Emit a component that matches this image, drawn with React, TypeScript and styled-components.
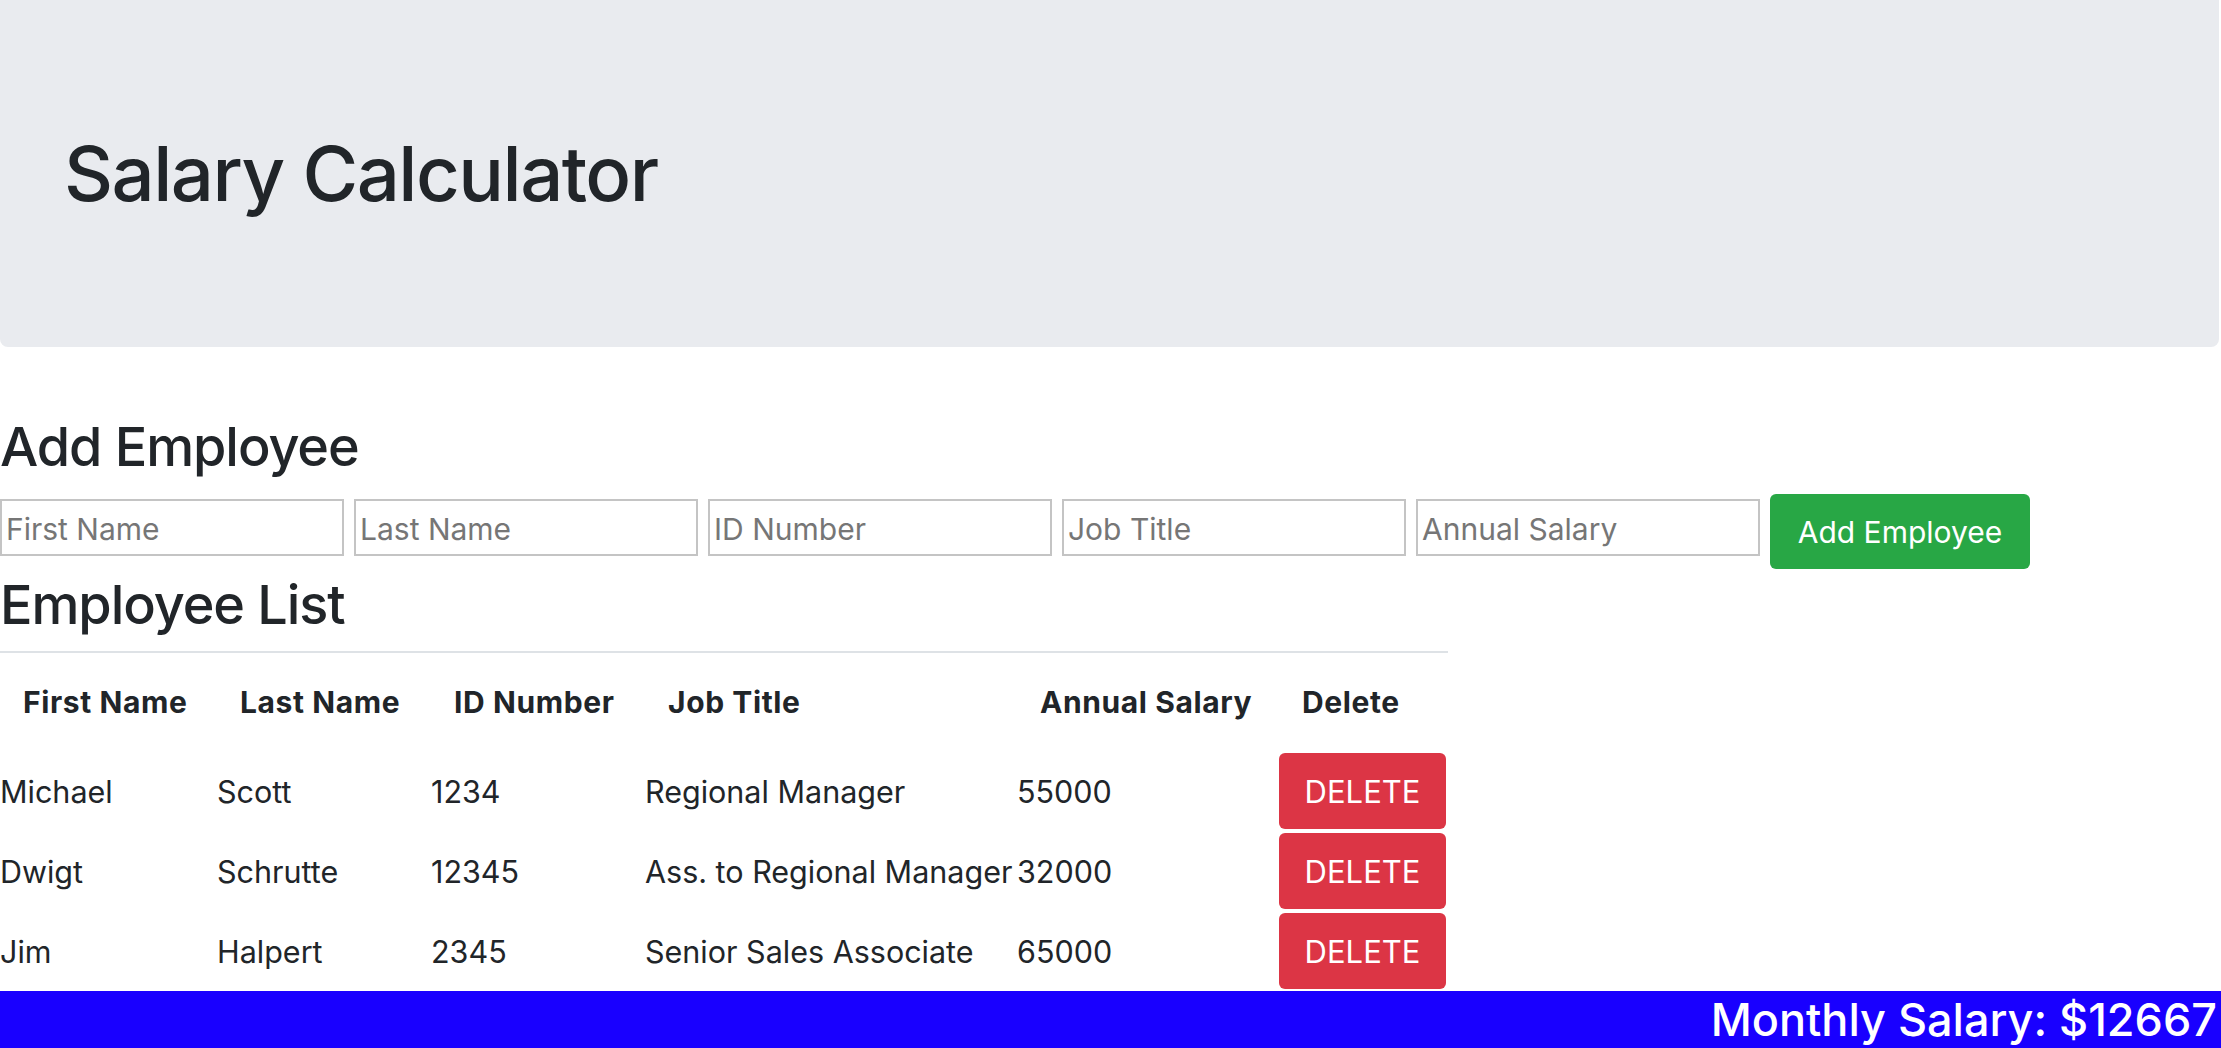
import React from "react";
import styled, { createGlobalStyle } from "styled-components";

const GlobalStyle = createGlobalStyle`
  html, body {
    margin: 0;
    padding: 0;
    background: #ffffff;
  }
  body {
    font-family: Inter, "Noto Sans", "Liberation Sans", sans-serif;
    color: #212529;
  }
  * { box-sizing: border-box; }
`;

const Page = styled.div`
  display: flex;
  flex-direction: column;
  width: 100%;
`;

const Jumbotron = styled.header`
  height: 347px;
  width: calc(100% - 2px);
  background: #e9ebef;
  border-radius: 0 0 8px 8px;
  display: flex;
  align-items: center;
  padding-left: 64px;
`;

const Title = styled.h1`
  margin: 0;
  font-size: 76px;
  font-weight: 500;
  line-height: 1.2;
  letter-spacing: -0.02em;
  color: #212529;
`;

const SectionTitle = styled.h2<{ $top: number }>`
  margin: ${(p) => p.$top}px 0 0 0;
  font-size: 54px;
  font-weight: 500;
  line-height: 66px;
  height: 66px;
  letter-spacing: -0.02em;
  color: #212529;
`;

const FormRow = styled.form`
  display: flex;
  align-items: flex-start;
  gap: 10px;
  margin-top: 14px;
`;

const Field = styled.input`
  width: 344px;
  height: 57px;
  margin-top: 5px;
  border: 2px solid #c4c4c4;
  padding: 2px 4px 0;
  font-family: Inter, "Noto Sans", sans-serif;
  font-size: 30px;
  color: #212529;
  background: #fff;
  outline: none;
  &::placeholder {
    color: #767676;
  }
`;

const AddButton = styled.button`
  width: 260px;
  height: 75px;
  border: none;
  border-radius: 6px;
  background: #28a745;
  color: #ffffff;
  font-family: Inter, "Noto Sans", sans-serif;
  font-size: 30px;
  font-weight: 400;
  cursor: pointer;
`;

const Table = styled.table`
  margin-top: 13px;
  width: 1448px;
  border-collapse: collapse;
  table-layout: fixed;
`;

const HeadCell = styled.th`
  border-top: 2px solid #dee2e6;
  height: 99px;
  padding: 0 0 0 23px;
  text-align: left;
  font-size: 30px;
  font-weight: 700;
  letter-spacing: 0.02em;
  color: #212529;
  white-space: nowrap;
  vertical-align: middle;
`;

const Cell = styled.td`
  height: 80px;
  padding: 2px 0;
  font-size: 30.5px;
  font-weight: 400;
  color: #212529;
  white-space: nowrap;
  vertical-align: middle;
`;

const DeleteButton = styled.button`
  display: block;
  width: 167px;
  height: 76px;
  border: none;
  border-radius: 6px;
  background: #dc3545;
  color: #ffffff;
  font-family: Inter, "Noto Sans", sans-serif;
  font-size: 31px;
  font-weight: 400;
  cursor: pointer;
`;

const Footer = styled.footer`
  height: 58px;
  background: #1900ff;
  color: #ffffff;
  text-align: right;
  padding-right: 4px;
  font-size: 45px;
  font-weight: 500;
  line-height: 58px;
`;

type Employee = {
  first: string;
  last: string;
  id: string;
  title: string;
  salary: number;
};

const employees: Employee[] = [
  { first: "Michael", last: "Scott", id: "1234", title: "Regional Manager", salary: 55000 },
  { first: "Dwigt", last: "Schrutte", id: "12345", title: "Ass. to Regional Manager", salary: 32000 },
  { first: "Jim", last: "Halpert", id: "2345", title: "Senior Sales Associate", salary: 65000 },
];

const colWidths = [217, 214, 214, 372, 262, 169];

export default function App() {
  const monthly = Math.round(employees.reduce((s, e) => s + e.salary, 0) / 12);
  return (
    <Page>
      <GlobalStyle />
      <Jumbotron>
        <Title>Salary Calculator</Title>
      </Jumbotron>
      <SectionTitle $top={67}>Add Employee</SectionTitle>
      <FormRow onSubmit={(e) => e.preventDefault()}>
        <Field placeholder="First Name" />
        <Field placeholder="Last Name" />
        <Field placeholder="ID Number" />
        <Field placeholder="Job Title" />
        <Field placeholder="Annual Salary" />
        <AddButton type="submit">Add Employee</AddButton>
      </FormRow>
      <SectionTitle $top={3}>Employee List</SectionTitle>
      <Table>
        <colgroup>
          {colWidths.map((w, i) => (
            <col key={i} style={{ width: w }} />
          ))}
        </colgroup>
        <thead>
          <tr>
            <HeadCell>First Name</HeadCell>
            <HeadCell>Last Name</HeadCell>
            <HeadCell>ID Number</HeadCell>
            <HeadCell>Job Title</HeadCell>
            <HeadCell>Annual Salary</HeadCell>
            <HeadCell>Delete</HeadCell>
          </tr>
        </thead>
        <tbody>
          {employees.map((e) => (
            <tr key={e.id}>
              <Cell>{e.first}</Cell>
              <Cell>{e.last}</Cell>
              <Cell>{e.id}</Cell>
              <Cell>{e.title}</Cell>
              <Cell>{e.salary}</Cell>
              <Cell>
                <DeleteButton type="button">DELETE</DeleteButton>
              </Cell>
            </tr>
          ))}
        </tbody>
      </Table>
      <Footer>Monthly Salary: ${monthly}</Footer>
    </Page>
  );
}
